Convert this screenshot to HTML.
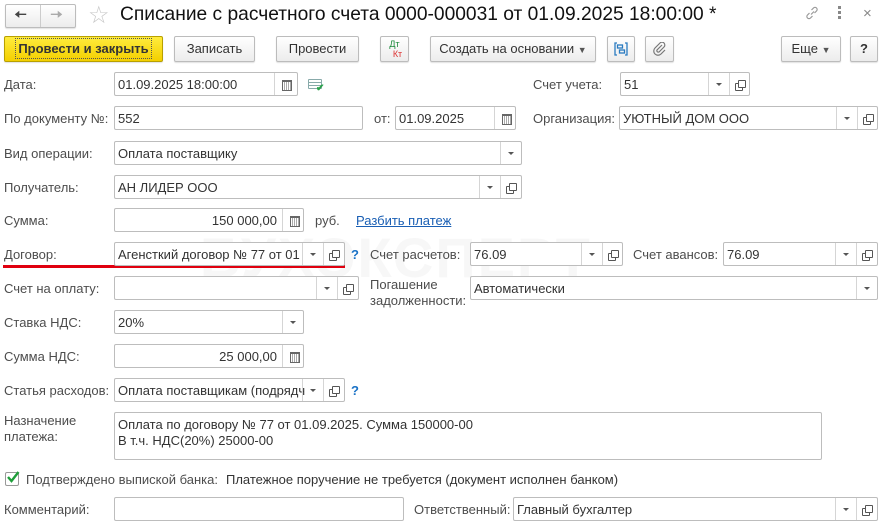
<!DOCTYPE html>
<html><head><meta charset="utf-8"><style>
*{box-sizing:border-box}
body{margin:0;width:882px;height:525px;background:#fff;font-family:"Liberation Sans",Arial,sans-serif;font-size:13px;color:#333;position:relative;overflow:hidden}
.a{position:absolute}
.l{position:absolute;color:#4d4d4d;white-space:nowrap}
.f{position:absolute;height:24px;border:1px solid #bdbdbd;border-radius:2px;background:#fff;line-height:23px;padding-left:3px;white-space:nowrap;overflow:hidden;color:#333}
.s{position:absolute;top:0;bottom:0;border-left:1px solid #d5d5d5;width:21px}
.dd::after{content:"";position:absolute;left:7px;top:10px;border:3px solid transparent;border-top:3px solid #555}
.op::after{content:"";position:absolute;left:8px;top:7px;width:6px;height:6px;border:1px solid #555;border-radius:1px;box-shadow:-3px 3px 0 -1px #fff,-3px 3px 0 0 #555}
.cal::after{content:"";position:absolute;left:7px;top:7px;width:8px;height:8px;border:1px solid #666;border-top:2px solid #666;background:repeating-linear-gradient(90deg,#fff 0 1px,#aaa 1px 2px)}
.b{position:absolute;top:36px;height:26px;border:1px solid #bcbcbc;border-radius:2px;background:linear-gradient(#fff,#ececec);text-align:center;line-height:24px;color:#333;white-space:nowrap;box-shadow:0 1px 1px rgba(0,0,0,.12)}
.q{position:absolute;color:#1a72c6;font-weight:bold}
.r{text-align:right;padding-right:26px}
</style></head><body>
<!-- header -->
<div class="b" style="left:5px;top:4px;width:71px;height:24px;"></div>
<div class="a" style="left:40px;top:5px;height:22px;border-left:1px solid #ccc"></div>
<div class="a" style="left:14px;top:4px;font-size:16px;color:#444">&#129060;</div>
<div class="a" style="left:50px;top:4px;font-size:16px;color:#aaa">&#129062;</div>
<div class="a" style="left:88px;top:1px;font-size:24px;color:#c8c8c8">☆</div>
<div class="a" style="left:120px;top:4px;font-size:19.2px;color:#111;white-space:nowrap">Списание с расчетного счета 0000-000031 от 01.09.2025 18:00:00 *</div>
<svg class="a" style="left:804px;top:5px" width="16" height="16" viewBox="0 0 16 16" fill="none" stroke="#999" stroke-width="1.2"><path d="M7 9.5 L10 6.5 M5.5 8 L3.5 10 a2 2 0 0 0 3 3 L8.5 11 M10.5 8 L12.5 6 a2 2 0 0 0 -3 -3 L7.5 5"/></svg>
<div class="a" style="left:838px;top:6px;width:3px;height:3px;background:#888;box-shadow:0 5px 0 #888,0 10px 0 #888"></div>
<div class="a" style="left:863px;top:5px;font-size:15px;color:#888">×</div>
<!-- toolbar -->
<div class="b" style="left:4px;width:159px;background:linear-gradient(#ffec3d,#f3cf00);border-color:#b8a000;font-weight:bold;color:#333"><span style="outline:1px dotted #555;padding:2px">Провести и закрыть</span></div>
<div class="b" style="left:174px;width:81px">Записать</div>
<div class="b" style="left:276px;width:83px">Провести</div>
<div class="b" style="left:380px;width:29px;font-size:9px;line-height:10px;padding-top:2px"><span style="color:#1a8a3a">Дт</span><br><span style="color:#d33;margin-left:6px">Кт</span></div>
<div class="b" style="left:430px;width:166px">Создать на основании <span style="font-size:9px;color:#555">▼</span></div>
<div class="b" style="left:607px;width:28px"><svg style="margin-top:5px" width="14" height="14" viewBox="0 0 14 14" fill="none" stroke="#2a7bc0" stroke-width="1.3"><path d="M3 1H1v12h2M11 1h2v12h-2"/><rect x="3.5" y="3" width="5" height="3"/><rect x="5.5" y="8" width="5" height="3"/></svg></div>
<div class="b" style="left:645px;width:29px"><svg style="margin-top:5px" width="14" height="14" viewBox="0 0 14 14" fill="none" stroke="#777" stroke-width="1.2"><path d="M9 3 L4 8 a1.5 1.5 0 0 0 2 2 L11 5 a2.8 2.8 0 0 0 -4 -4 L2 6 a4 4 0 0 0 6 6 L12 8"/></svg></div>
<div class="b" style="left:781px;width:60px">Еще <span style="font-size:9px;color:#555">▼</span></div>
<div class="b" style="left:850px;width:28px;font-weight:bold">?</div>
<!-- watermark -->
<div class="a" style="left:200px;top:225px;font-size:56px;font-weight:bold;color:#f7f7f7;letter-spacing:2px;z-index:-1">БУХЭКСПЕРТ</div>
<!-- row 1 -->
<div class="l" style="left:4px;top:77px">Дата:</div>
<div class="f" style="left:114px;top:72px;width:184px">01.09.2025 18:00:00<div class="s cal" style="right:0;width:23px"></div></div>
<div class="a" style="left:308px;top:79px;width:14px;height:10px;border:1px solid #8aa;border-radius:1px;background:repeating-linear-gradient(#fff 0 2px,#8aa 2px 3px)"></div>
<div class="a" style="left:316px;top:83px;color:#2aa34a;font-size:10px;font-weight:bold">✔</div>
<div class="l" style="left:533px;top:77px">Счет учета:</div>
<div class="f" style="left:620px;top:72px;width:130px">51<div class="s dd" style="right:20px"></div><div class="s op" style="right:0;width:20px"></div></div>
<!-- row 2 -->
<div class="l" style="left:4px;top:111px">По документу №:</div>
<div class="f" style="left:114px;top:106px;width:249px">552</div>
<div class="l" style="left:374px;top:111px">от:</div>
<div class="f" style="left:395px;top:106px;width:121px">01.09.2025<div class="s cal" style="right:0"></div></div>
<div class="l" style="left:533px;top:111px">Организация:</div>
<div class="f" style="left:619px;top:106px;width:259px">УЮТНЫЙ ДОМ ООО<div class="s dd" style="right:20px"></div><div class="s op" style="right:0;width:20px"></div></div>
<!-- row 3 -->
<div class="l" style="left:4px;top:146px">Вид операции:</div>
<div class="f" style="left:114px;top:141px;width:408px">Оплата поставщику<div class="s dd" style="right:0"></div></div>
<div class="l" style="left:4px;top:180px">Получатель:</div>
<div class="f" style="left:114px;top:175px;width:408px">АН ЛИДЕР ООО<div class="s dd" style="right:21px"></div><div class="s op" style="right:0"></div></div>
<div class="l" style="left:4px;top:213px">Сумма:</div>
<div class="f r" style="left:114px;top:208px;width:190px">150 000,00<div class="s cal" style="right:0"></div></div>
<div class="l" style="left:315px;top:213px">руб.</div>
<div class="a" style="left:356px;top:213px;color:#1a5fb4;text-decoration:underline">Разбить платеж</div>
<!-- Договор -->
<div class="l" style="left:4px;top:247px">Договор:</div>
<div class="a" style="left:3px;top:265px;width:342px;height:3px;background:#e0000f"></div>
<div class="f" style="left:114px;top:242px;width:231px">Агенсткий договор № 77 от 01<div class="s dd" style="right:21px"></div><div class="s op" style="right:0"></div></div>
<div class="q" style="left:351px;top:247px">?</div>
<div class="l" style="left:370px;top:247px">Счет расчетов:</div>
<div class="f" style="left:470px;top:242px;width:153px">76.09<div class="s dd" style="right:20px"></div><div class="s op" style="right:0;width:20px"></div></div>
<div class="l" style="left:633px;top:247px">Счет авансов:</div>
<div class="f" style="left:723px;top:242px;width:155px">76.09<div class="s dd" style="right:21px"></div><div class="s op" style="right:0"></div></div>
<!-- Счет на оплату -->
<div class="l" style="left:4px;top:281px">Счет на оплату:</div>
<div class="f" style="left:114px;top:276px;width:245px"><div class="s dd" style="right:21px"></div><div class="s op" style="right:0"></div></div>
<div class="l" style="left:370px;top:277px;line-height:16px">Погашение<br>задолженности:</div>
<div class="f" style="left:470px;top:276px;width:408px">Автоматически<div class="s dd" style="right:0"></div></div>
<div class="l" style="left:4px;top:315px">Ставка НДС:</div>
<div class="f" style="left:114px;top:310px;width:190px">20%<div class="s dd" style="right:0"></div></div>
<div class="l" style="left:4px;top:349px">Сумма НДС:</div>
<div class="f r" style="left:114px;top:344px;width:190px">25 000,00<div class="s cal" style="right:0"></div></div>
<div class="l" style="left:4px;top:383px">Статья расходов:</div>
<div class="f" style="left:114px;top:378px;width:231px">Оплата поставщикам (подрядч<div class="s dd" style="right:21px"></div><div class="s op" style="right:0"></div></div>
<div class="q" style="left:351px;top:383px">?</div>
<!-- Назначение -->
<div class="l" style="left:4px;top:413px;line-height:16px">Назначение<br>платежа:</div>
<div class="f" style="left:114px;top:412px;width:708px;height:48px;line-height:16px;padding-top:4px">Оплата по договору № 77 от 01.09.2025. Сумма 150000-00<br>В т.ч. НДС(20%) 25000-00</div>
<div class="a" style="left:5px;top:472px;width:14px;height:14px;border:1px solid #999;border-radius:2px;background:#fff"></div>
<svg class="a" style="left:6px;top:470px" width="14" height="14" viewBox="0 0 14 14"><path d="M2 7 L5.5 11 L12.5 2" fill="none" stroke="#1f9e3a" stroke-width="2.4"/></svg>
<div class="l" style="left:26px;top:472px">Подтверждено выпиской банка:</div>
<div class="a" style="left:226px;top:472px;color:#333;white-space:nowrap">Платежное поручение не требуется (документ исполнен банком)</div>
<div class="l" style="left:4px;top:502px">Комментарий:</div>
<div class="f" style="left:114px;top:497px;width:290px"></div>
<div class="l" style="left:414px;top:502px">Ответственный:</div>
<div class="f" style="left:513px;top:497px;width:365px">Главный бухгалтер<div class="s dd" style="right:21px"></div><div class="s op" style="right:0"></div></div>
</body></html>
